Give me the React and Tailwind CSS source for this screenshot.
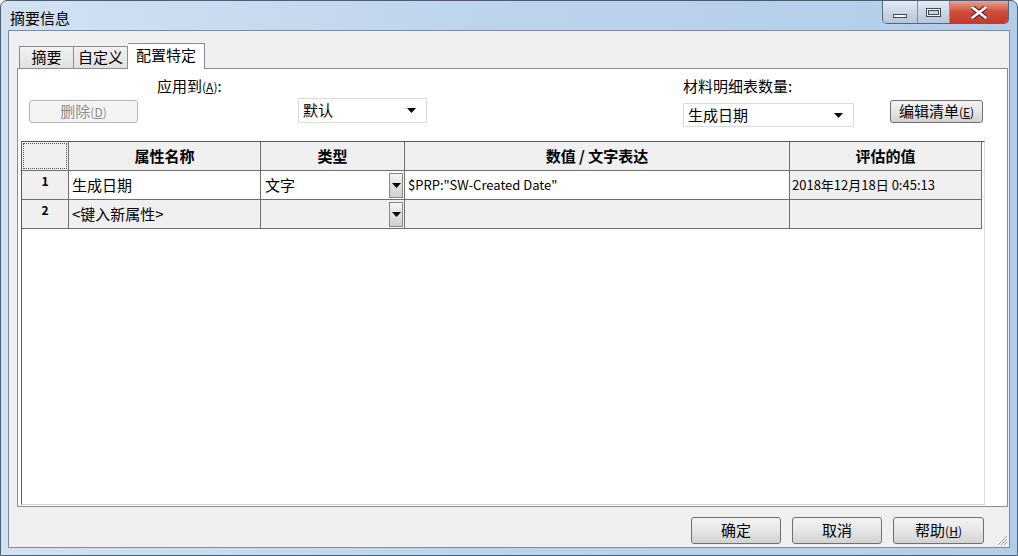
import React from 'react';

const font = "font-['Noto_Sans_CJK_SC',sans-serif]";

const Mn = ({ ch }) => (
  <span className="text-[12px]">
    (<span className="underline">{ch}</span>)
  </span>
);

const WinButton = ({ children, className = '', disabled }) => (
  <div
    className={
      'flex items-center justify-center rounded-[3px] border text-[15px] ' +
      (disabled
        ? 'border-[#b5b8bb] bg-[#f4f4f4] text-[#8d8d8d] '
        : 'border-[#707070] bg-gradient-to-b from-[#f3f3f3] via-[#e6e6e6] to-[#d2d2d2] text-black ') +
      className
    }
  >
    {children}
  </div>
);

const Caret = () => (
  <svg width="9" height="5" viewBox="0 0 9 5">
    <path d="M0 0h9L4.5 5z" fill="#000" />
  </svg>
);

const Combo = ({ label, className = '' }) => (
  <div
    className={
      'flex items-center justify-between border border-[#dcdcdc] bg-white pl-[4px] pr-[10px] text-[15px] ' +
      className
    }
  >
    <span>{label}</span>
    <Caret />
  </div>
);

const DropBtn = () => (
  <div className="mr-px flex h-[25px] w-[14px] items-center justify-center border border-[#8a8a8a] bg-gradient-to-b from-[#f4f4f4] to-[#cfcfcf]">
    <Caret />
  </div>
);

const cell = 'border-r border-b border-[#6e6e6e] h-[29px]';

const TitleControls = () => (
  <div className="mr-[8px] flex h-[23px] overflow-hidden rounded-b-[5px] border border-t-0 border-[#56657a]">
    <div className="flex w-[35px] items-end justify-center border-r border-[#7f8fa4] bg-gradient-to-b from-[#e3ebf4] via-[#cbd7e5] to-[#b7c6d8] pb-[5px]">
      <div className="h-[4px] w-[14px] border border-[#3f4a59] bg-white" />
    </div>
    <div className="flex w-[32px] items-center justify-center border-r border-[#7f8fa4] bg-gradient-to-b from-[#e3ebf4] via-[#cbd7e5] to-[#b7c6d8]">
      <div className="h-[9px] w-[15px] border border-[#3f4a59] bg-white p-[1px]">
        <div className="h-full w-full border border-[#3f4a59] bg-[#c9d4e2]" />
      </div>
    </div>
    <div className="flex w-[58px] items-center justify-center bg-gradient-to-b from-[#e8a293] via-[#cf4a3a] to-[#c4392c]">
      <svg width="16" height="13" viewBox="0 0 16 13">
        <path
          d="M1 1 L15 12 M15 1 L1 12"
          stroke="#5a1a14"
          strokeWidth="4.6"
          strokeLinecap="round"
        />
        <path
          d="M1.5 1.5 L14.5 11.5 M14.5 1.5 L1.5 11.5"
          stroke="#fff"
          strokeWidth="2.8"
          strokeLinecap="round"
        />
      </svg>
    </div>
  </div>
);

const PropertyTable = () => (
  <div className="ml-[3px] h-[364px] w-[964px] border-t border-l border-[#5a5a5a] border-r border-b border-r-[#dedede] border-b-[#cfcfcf] bg-white">
    <div className="grid grid-cols-[47px_192px_144px_385px_192px]">
      <div className={cell + ' bg-[#f0f0f0] p-[1px]'}>
        <div className="h-full w-full border border-dotted border-[#555]" />
      </div>
      {['属性名称', '类型', '数值 / 文字表达', '评估的值'].map((h) => (
        <div
          key={h}
          className={cell + ' flex items-center justify-center bg-[#f0f0f0] text-[15px] font-bold'}
        >
          {h}
        </div>
      ))}

      <div className={cell + ' flex justify-center bg-[#f0f0f0] pt-[1px] text-[12px] font-bold'}>1</div>
      <div className={cell + ' flex items-center bg-white pl-[3px] text-[15px]'}>生成日期</div>
      <div className={cell + ' flex items-center justify-between bg-white pl-[4px] text-[15px]'}>
        <span>文字</span>
        <DropBtn />
      </div>
      <div className={cell + ' flex items-center bg-white pl-[3px] text-[13px]'}>
        $PRP:"SW-Created Date"
      </div>
      <div className={cell + ' flex items-center bg-[#f0f0f0] pl-[2px] text-[13px]'}>
        2018年12月18日 0:45:13
      </div>

      <div className={cell + ' flex justify-center bg-[#f0f0f0] pt-[1px] text-[12px] font-bold'}>2</div>
      <div className={cell + ' flex items-center bg-[#f0f0f0] pl-[3px] text-[15px]'}>&lt;键入新属性&gt;</div>
      <div className={cell + ' flex items-center justify-end bg-[#f0f0f0]'}>
        <DropBtn />
      </div>
      <div className={cell + ' bg-[#f0f0f0]'} />
      <div className={cell + ' bg-[#f0f0f0]'} />
    </div>
  </div>
);

export default function App() {
  return (
    <div
      className={
        font +
        ' flex h-[556px] w-[1018px] flex-col overflow-hidden rounded-t-[7px] border border-[#4d5c70] bg-gradient-to-r from-[#d2e2f3] via-[#bcd3ec] to-[#b3cde9] text-black'
      }
    >
      <div className="flex h-[29px] items-start">
        <span className="pl-[9px] pt-[7px] text-[15px] leading-[20px]">摘要信息</span>
        <div className="ml-auto">
          <TitleControls />
        </div>
      </div>

      <div className="flex-1 px-[7px] pb-[7px]">
        <div className="flex h-full flex-col border border-[#7b8ca2] bg-[#f0f0f0]">
          <div className="flex items-end pl-[10px] pt-[12px]">
            <div className="flex h-[22px] w-[55px] items-center justify-center border border-b-0 border-[#898c95] bg-gradient-to-b from-[#f2f2f2] to-[#e0e0e0] text-[15px]">
              摘要
            </div>
            <div className="flex h-[22px] w-[54px] items-center justify-center border border-b-0 border-l-0 border-[#898c95] bg-gradient-to-b from-[#f2f2f2] to-[#e0e0e0] text-[15px]">
              自定义
            </div>
            <div className="relative z-10 -mb-px flex h-[26px] w-[77px] items-center justify-center border border-b-0 border-l-0 border-[#898c95] bg-white pb-[2px] text-[15px]">
              配置特定
            </div>
          </div>

          <div className="ml-[8px] mr-px flex h-[439px] flex-col border border-[#898c95] bg-white">
            <div className="flex h-[72px] items-start">
              <WinButton disabled className="ml-[11px] mt-[31px] h-[23px] w-[109px]">
                删除<Mn ch="D" />
              </WinButton>
              <div className="ml-[19px] mt-[8px] w-[141px] text-[15px] leading-[18px]">
                应用到<Mn ch="A" />:
              </div>
              <Combo label="默认" className="mt-[29px] h-[25px] w-[129px]" />
              <div className="ml-[256px] mt-[8px] flex flex-col">
                <div className="text-[15px] leading-[18px]">材料明细表数量:</div>
                <Combo label="生成日期" className="mt-[8px] h-[24px] w-[171px]" />
              </div>
              <WinButton className="ml-[36px] mt-[31px] h-[23px] w-[93px]">
                编辑清单<Mn ch="E" />
              </WinButton>
            </div>
            <PropertyTable />
          </div>

          <div className="relative flex flex-1 justify-end gap-[11px] pr-[25px] pt-[10px]">
            <WinButton className="h-[27px] w-[90px]">确定</WinButton>
            <WinButton className="h-[27px] w-[90px]">取消</WinButton>
            <WinButton className="h-[27px] w-[91px]">
              帮助<Mn ch="H" />
            </WinButton>
            <svg className="absolute bottom-px right-px" width="12" height="12" viewBox="0 0 12 12">
              <path d="M11 2 L2 11 M11 5 L5 11 M11 8 L8 11" stroke="#a0a0a0" strokeWidth="1" />
            </svg>
          </div>
        </div>
      </div>
    </div>
  );
}
